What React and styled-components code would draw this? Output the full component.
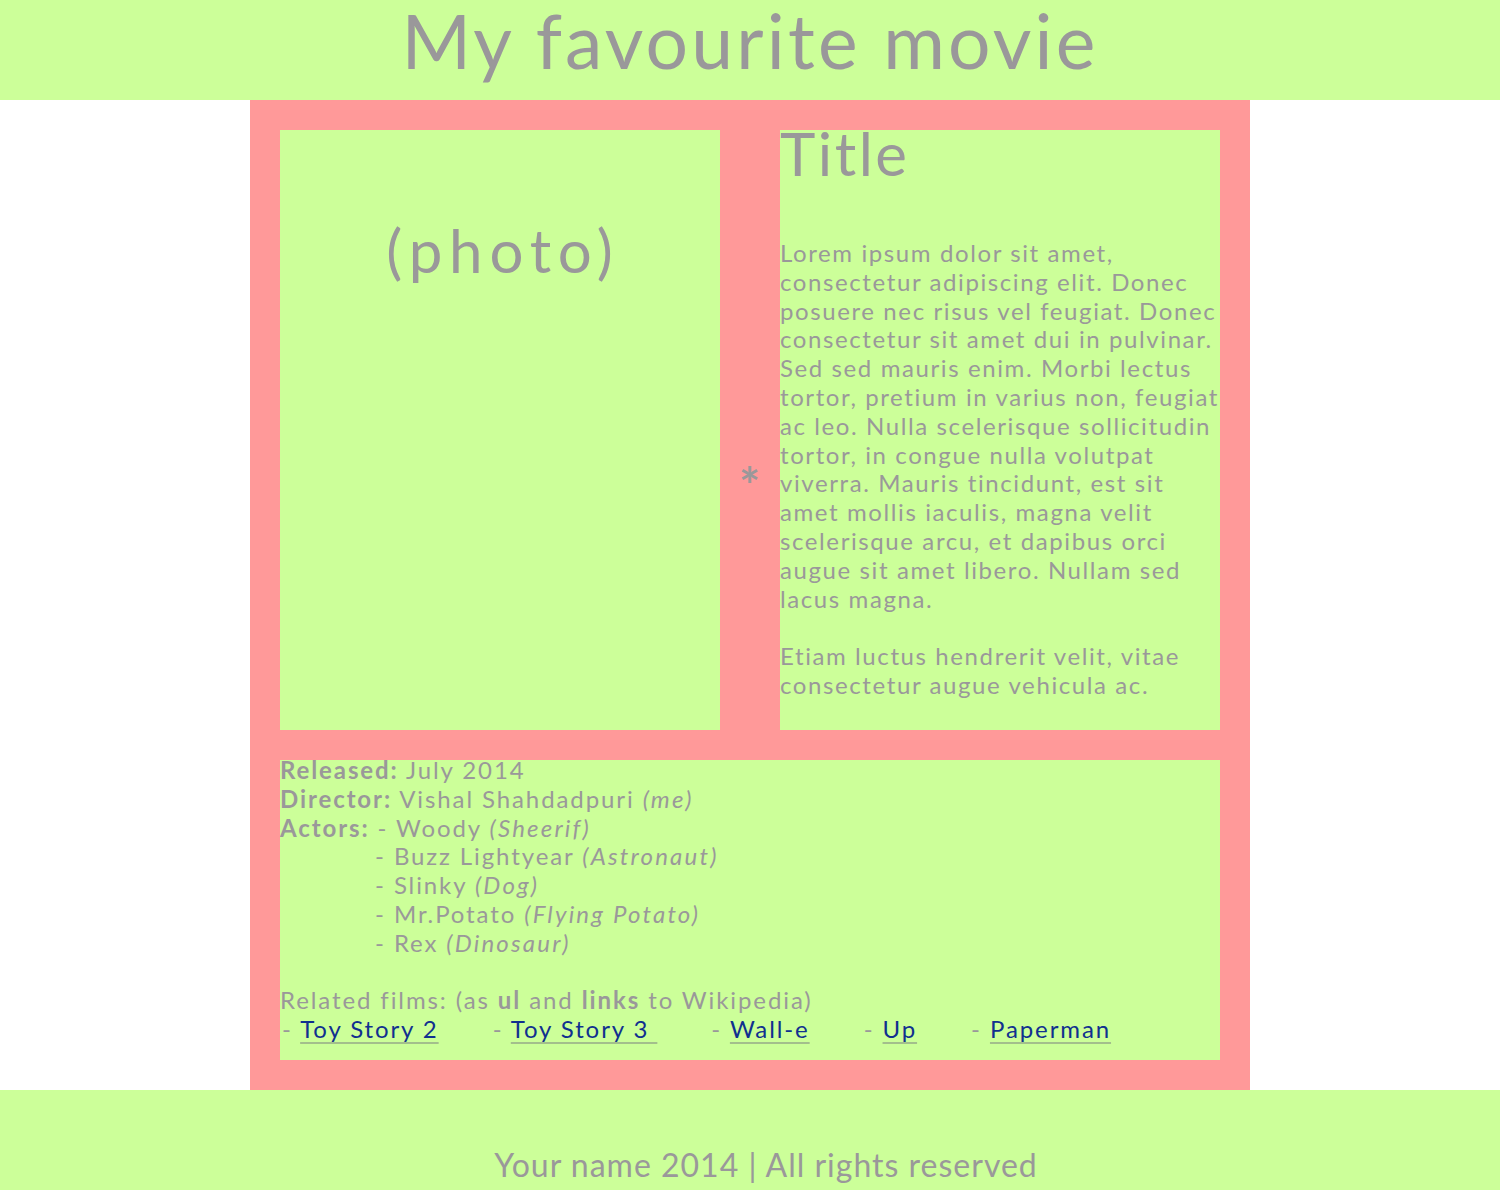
import React from 'react';
import styled, { createGlobalStyle } from 'styled-components';

const GlobalStyle = createGlobalStyle`
  body {
    margin: 0;
    background: #fff;
    font-family: Lato, "Open Sans", sans-serif;
    color: #9a989a;
  }
`;

const Header = styled.header`
  height: 100px;
  background: #ccff99;
  text-align: center;
  overflow: hidden;
`;

const PageTitle = styled.h1`
  margin: 0;
  font-size: 75px;
  font-weight: 400;
  line-height: 80px;
  letter-spacing: 3.2px;
`;

const Main = styled.main`
  width: 940px;
  margin: 0 auto;
  padding: 30px;
  background: #ff9999;
  display: grid;
  grid-template-columns: 440px 60px 440px;
  grid-template-rows: 600px 300px;
  row-gap: 30px;
`;

const Panel = styled.section`
  background: #ccff99;
  grid-column: ${(p) => p.$span || 'auto'};
`;

const Photo = styled(Panel)`
  text-align: center;
  font-size: 60px;
  line-height: 72px;
  padding: 84px 0 0 6px;
  box-sizing: border-box;
  letter-spacing: 6.8px;
`;

const Divider = styled.div`
  display: flex;
  align-items: center;
  justify-content: center;
  font-size: 50px;
  font-weight: 700;
  padding-top: 110px;
`;

const Title = styled.h2`
  margin: 0 0 63px;
  font-size: 60px;
  font-weight: 400;
  line-height: 46px;
  letter-spacing: 2.5px;
`;

const Text = styled.p`
  margin: 0 0 28.8px;
  font-size: 24px;
  line-height: 28.8px;
  letter-spacing: 1.6px;
`;

const Details = styled(Panel)`
  font-size: 24px;
  line-height: 28.8px;
  letter-spacing: 1.9px;
`;

const Facts = styled.div`
  margin-top: -4px;
`;

const Line = styled.div`
  padding-left: ${(p) => p.$indent || 0}px;
`;

const Label = styled.b`
  font-weight: 700;
`;

const Role = styled.i`
  font-style: italic;
  letter-spacing: 2.2px;
`;

const Related = styled.div`
  margin-top: 28.8px;
`;

const FilmList = styled.ul`
  list-style: none;
  margin: 0;
  padding: 0 0 0 2px;
  display: flex;
  gap: 54px;
`;

const FilmLink = styled.a`
  color: #10308f;
  text-decoration: underline;
  text-decoration-color: #a3bf8c;
  text-underline-offset: 4px;
`;

const Footer = styled.footer`
  height: 100px;
  box-sizing: border-box;
  padding: 56px 0 0 32px;
  background: #ccff99;
  text-align: center;
  font-size: 32px;
  line-height: 38px;
  letter-spacing: 1px;
`;

const actors = [
  ['Woody', 'Sheerif'],
  ['Buzz Lightyear', 'Astronaut'],
  ['Slinky', 'Dog'],
  ['Mr.Potato', 'Flying Potato'],
  ['Rex', 'Dinosaur'],
];

const films = [
  ['Toy Story 2', 'https://en.wikipedia.org/wiki/Toy_Story_2'],
  ['Toy Story 3\u00a0', 'https://en.wikipedia.org/wiki/Toy_Story_3'],
  ['Wall-e', 'https://en.wikipedia.org/wiki/WALL-E'],
  ['Up', 'https://en.wikipedia.org/wiki/Up_(2009_film)'],
  ['Paperman', 'https://en.wikipedia.org/wiki/Paperman'],
];

const App = () => {
  return (
    <>
      <GlobalStyle />
      <Header>
        <PageTitle>My favourite movie</PageTitle>
      </Header>

      <Main>
        <Photo>(photo)</Photo>
        <Divider>*</Divider>
        <Panel>
          <Title>Title</Title>
          <Text>
            Lorem ipsum dolor sit amet, consectetur adipiscing elit. Donec posuere nec risus vel feugiat. Donec
            consectetur sit amet dui in pulvinar. Sed sed mauris enim. Morbi lectus tortor, pretium in varius non,
            feugiat ac leo. Nulla scelerisque sollicitudin tortor, in congue nulla volutpat viverra. Mauris
            tincidunt, est sit amet mollis iaculis, magna velit scelerisque arcu, et dapibus orci augue sit amet
            libero. Nullam sed lacus magna.
          </Text>
          <Text>Etiam luctus hendrerit velit, vitae consectetur augue vehicula ac.</Text>
        </Panel>

        <Details $span="1 / 4">
          <Facts>
            <Line><Label>Released:</Label> July 2014</Line>
            <Line><Label>Director:</Label> Vishal Shahdadpuri <Role>(me)</Role></Line>
            {actors.map(([name, role], i) => (
              <Line key={name} $indent={i === 0 ? 0 : 95}>
                {i === 0 && <><Label>Actors:</Label> </>}- {name} <Role>({role})</Role>
              </Line>
            ))}
            <Related>
              Related films: (as <Label>ul</Label> and <Label>links</Label> to Wikipedia)
            </Related>
            <FilmList>
              {films.map(([name, href]) => (
                <li key={name}>- <FilmLink href={href}>{name}</FilmLink></li>
              ))}
            </FilmList>
          </Facts>
        </Details>
      </Main>

      <Footer>Your name 2014 | All rights reserved</Footer>
    </>
  );
};

export default App;
